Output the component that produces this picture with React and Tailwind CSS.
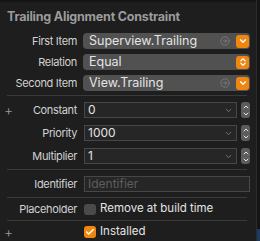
import { ChevronDown, ChevronUp, ChevronsUpDown, Check, CircleArrowRight } from "lucide-react";

const Label = ({ children }) => (
    <span className="w-[78px] shrink-0 text-right pr-[1px] text-[11px] text-[#d2d2d2] tracking-[-0.35px]">{children}</span>
);

const Plus = () => (
    <span className="absolute left-[4px] text-[14px] leading-none text-[#9a9a9a] font-light">+</span>
);

const Separator = () => <div className="h-px bg-[#3a3a3a] ml-[7px] mr-[9px]" />;

const PopupRow = ({ name, value, arrow, both }) => (
    <div className="flex items-center h-[16px]">
        <Label>{name}</Label>
        <div className="ml-[5px] flex-1 h-[16px] rounded-[4px] bg-[#515151] flex items-center pl-[6px] pr-[1px]">
            <span className="flex-1 text-[12.5px] text-[#e4e4e4]">{value}</span>
            {arrow && <CircleArrowRight size={10} strokeWidth={1.5} className="text-[#8f8f8f] mr-[6px]" />}
            <span className="w-[13px] h-[13px] rounded-[3px] bg-[#f0860f] flex items-center justify-center">
                {both
                    ? <ChevronsUpDown size={10} strokeWidth={3} className="text-white" />
                    : <ChevronDown size={10} strokeWidth={3} className="text-white" />}
            </span>
        </div>
    </div>
);

const StepperRow = ({ name, value, plus }) => (
    <div className="relative flex items-center h-[16px]">
        {plus && <Plus />}
        <Label>{name}</Label>
        <div className="ml-[6px] flex-1 h-[16px] border border-[#474747] bg-[#262626] flex items-center pl-[3px] pr-[3px]">
            <span className="flex-1 text-[12px] text-[#e4e4e4]">{value}</span>
            <ChevronDown size={9} strokeWidth={2} className="text-[#8d8d8d]" />
        </div>
        <div className="ml-[4px] w-[9px] h-[16px] rounded-[3px] bg-[#5c5c5c] flex flex-col items-center justify-center">
            <ChevronUp size={8} strokeWidth={3} className="text-[#e4e4e4] -mb-[1px]" />
            <ChevronDown size={8} strokeWidth={3} className="text-[#e4e4e4]" />
        </div>
    </div>
);

export default function App() {
    return (
        <div className="flex w-[260px] h-[241px] bg-[#151515]" style={{ fontFamily: "Inter, 'Noto Sans', sans-serif" }}>
            <div className="w-[257px] h-full bg-[#1e1e1e] border-r border-[#2c2c2c] flex flex-col">
                <div className="h-[2px] bg-[#151515]" />
                <div className="pl-[7px] mt-[7px] h-[16px] flex items-center text-[12.5px] font-bold text-[#9b9b9b] tracking-[-0.2px]">
                    Trailing Alignment Constraint
                </div>
                <div className="mr-[6px] flex flex-col">
                    <div className="mt-[8px]"><PopupRow name="First Item" value="Superview.Trailing" arrow /></div>
                    <div className="mt-[5px]"><PopupRow name="Relation" value="Equal" both /></div>
                    <div className="mt-[5px]"><PopupRow name="Second Item" value="View.Trailing" arrow /></div>
                </div>
                <div className="mt-[4px]"><Separator /></div>
                <div className="mr-[6px] flex flex-col">
                    <div className="mt-[6px]"><StepperRow name="Constant" value="0" plus /></div>
                    <div className="mt-[7px]"><StepperRow name="Priority" value="1000" /></div>
                    <div className="mt-[7px]"><StepperRow name="Multiplier" value="1" /></div>
                </div>
                <div className="mt-[5px]"><Separator /></div>
                <div className="mr-[6px] mt-[6px] flex items-center h-[16px]">
                    <Label>Identifier</Label>
                    <div className="ml-[6px] flex-1 h-[16px] border border-[#474747] bg-[#262626] flex items-center pl-[3px]">
                        <span className="text-[12px] text-[#5e5e5e]">Identifier</span>
                    </div>
                </div>
                <div className="mt-[5px]"><Separator /></div>
                <div className="mt-[3px] flex items-center h-[16px]">
                    <Label>Placeholder</Label>
                    <span className="ml-[6px] w-[12px] h-[11px] rounded-[3px] bg-[#4a4a4a]" />
                    <span className="ml-[4px] text-[11.5px] text-[#e4e4e4]">Remove at build time</span>
                </div>
                <div className="mt-[3px]"><Separator /></div>
                <div className="relative mt-[3px] flex items-center h-[16px]">
                    <Plus />
                    <span className="w-[78px] shrink-0" />
                    <span className="ml-[6px] w-[12px] h-[12px] rounded-[3px] bg-[#f0860f] flex items-center justify-center">
                        <Check size={10} strokeWidth={3.5} className="text-white" />
                    </span>
                    <span className="ml-[4px] text-[11.5px] text-[#e4e4e4]">Installed</span>
                </div>
            </div>
            <div className="flex-1 flex flex-col justify-end">
                <div className="h-[12px] bg-[#1d3a66]" />
            </div>
        </div>
    );
}
